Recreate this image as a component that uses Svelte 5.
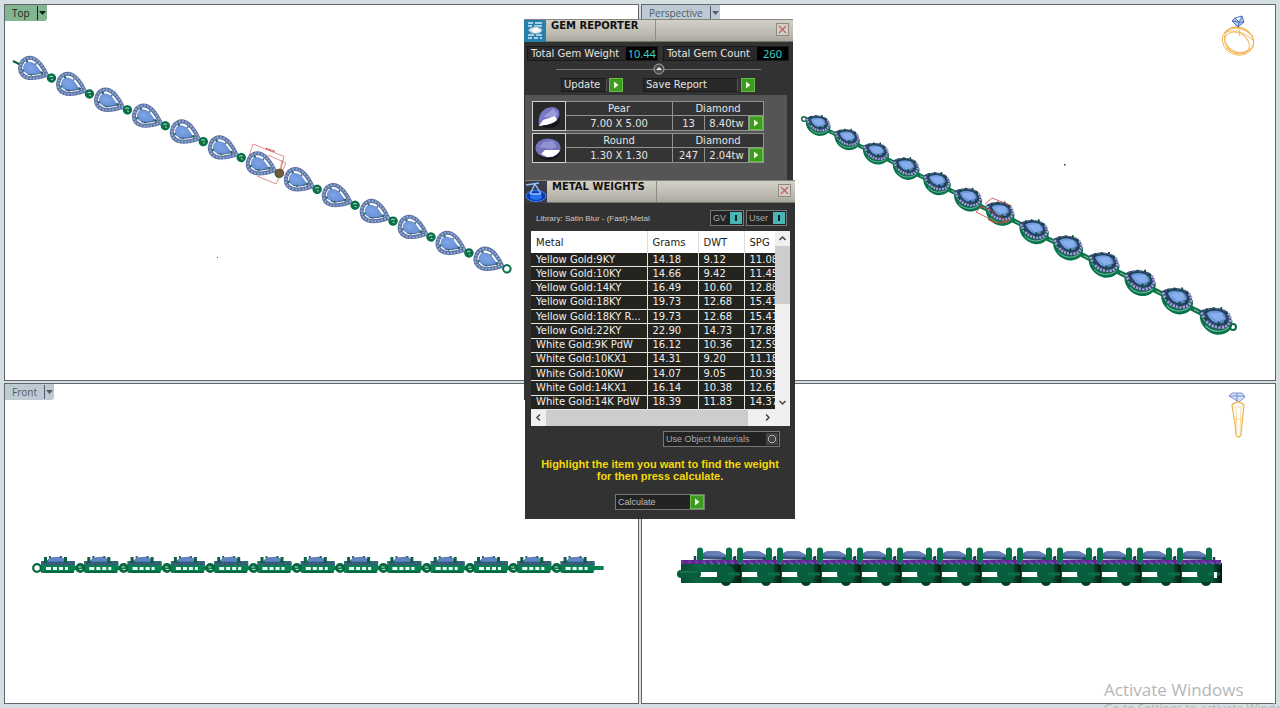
<script>
  let showGv = true;
  let showUser = true;
  let useObjectMaterials = false;

  const gems = [
    { shape: "Pear", type: "Diamond", size: "7.00 X 5.00", count: 13, weight: "8.40tw" },
    { shape: "Round", type: "Diamond", size: "1.30 X 1.30", count: 247, weight: "2.04tw" },
  ];

  const metals = [
    ["Yellow Gold:9KY", "14.18", "9.12", "11.08"],
    ["Yellow Gold:10KY", "14.66", "9.42", "11.45"],
    ["Yellow Gold:14KY", "16.49", "10.60", "12.88"],
    ["Yellow Gold:18KY", "19.73", "12.68", "15.41"],
    ["Yellow Gold:18KY R...", "19.73", "12.68", "15.41"],
    ["Yellow Gold:22KY", "22.90", "14.73", "17.89"],
    ["White Gold:9K PdW", "16.12", "10.36", "12.59"],
    ["White Gold:10KX1", "14.31", "9.20", "11.18"],
    ["White Gold:10KW", "14.07", "9.05", "10.99"],
    ["White Gold:14KX1", "16.14", "10.38", "12.61"],
    ["White Gold:14K PdW", "18.39", "11.83", "14.37"],
  ];

  // the bracelet has 13 stones, each viewport draws them its own way
  const links = Array.from({ length: 13 }, (_, i) => i);

  const perspective = [
    [818, 124], [847, 138], [876, 152], [906, 167], [937, 182], [968, 198], [1000, 212],
    [1034, 230], [1068, 246], [1104, 263], [1140, 281], [1177, 299], [1216, 319],
  ];

  const halo = "M15.500 0 C10 -5 4 -10 -3 -10 C-9 -10 -12.500 -5.500 -12.500 0 C-12.500 5.500 -9 10 -3 10 C4 10 10 5 15.500 0 Z";
</script>

{#snippet arrow()}
  <span class="go">
    <svg viewBox="0 0 12 12" aria-hidden="true"><path d="M4 2.500 L8.500 6 L4 9.500 Z" fill="#e9ffd8" /></svg>
  </span>
{/snippet}

{#snippet closeButton()}
  <button class="close" aria-label="Close">
    <svg viewBox="0 0 11 11" aria-hidden="true"><path d="M2 2 L9 9 M9 2 L2 9" stroke="#c4605c" stroke-width="1.200" /></svg>
  </button>
{/snippet}

{#snippet viewTab(name, active)}
  <button class="tab" class:active>
    <span>{name}</span>
    <svg viewBox="0 0 10 16" aria-hidden="true"><path d="M.5 1 V15" stroke="currentColor" /><path d="M2 6 H9 L5.500 10 Z" fill="currentColor" /></svg>
  </button>
{/snippet}

<main>
  <section class="view">
    {@render viewTab("Top", true)}
    <svg class="scene" viewBox="5 5 633 375" preserveAspectRatio="xMinYMin meet">
      <defs>
        <radialGradient id="stone" cx=".35" cy=".45" r=".7">
          <stop offset="0" stop-color="#7fa5ea" />
          <stop offset=".65" stop-color="#6c93d6" />
          <stop offset="1" stop-color="#4868a8" />
        </radialGradient>
      </defs>
      <path d="M13 61 L21 65" stroke="#0b6040" stroke-width="2" />
      {#each links as i}
        <g transform="translate({32.500 + i * 37.950} {69 + i * 15.900}) rotate(22.700)">
          <path d="M15 0 H25" stroke="#0b6b43" stroke-width="2.500" />
          <path d={halo} fill="#fff" stroke="#5b6f9d" stroke-width="4" />
          <path d={halo} fill="none" stroke="#8aa5d6" stroke-width="2.200" stroke-dasharray="2 1.300" />
          <path d="M10 0 C5 -3 2 -6 -3 -6 C-7 -6 -9.500 -3.500 -9.500 0 C-9.500 4 -7 6.500 -3 6.500 C2 6.500 5 3.500 10 0 Z" fill="url(#stone)" />
          <path d="M9 1 C5 4 2 6.500 -3 6.500" fill="none" stroke="#3d5c96" />
          <g fill="#2a6b66">
            <circle cx="-8" cy="-5" r="1.200" /><circle cx="-8" cy="5" r="1.200" />
            <circle cx="1" cy="-6" r=".9" /><circle cx="1" cy="6" r=".9" /><circle cx="10" cy="0" r="1.500" />
          </g>
          <circle cx="21" cy="1" r="3.700" fill={i === 12 ? "#fff" : "#0b6b43"} stroke="#07734a" stroke-width="2" />
          {#if i < 12}
            <path d="M19 1 a2 2 0 0 1 3 -1.500 M21 2 h2" fill="none" stroke="#b9d8c8" stroke-width="1" />
          {/if}
        </g>
      {/each}
      <path d="M249 156 L253 144 L284 156.500 L280 173 M268 155 L286 163 L276 184 L257 176 M282 160 L280 172" fill="none" stroke="#d27570" stroke-width=".8" />
      <path d="M266 148.500 L275 151.500" stroke="#c8322c" stroke-width="1.500" stroke-dasharray="1 .5" />
      <circle cx="280" cy="173" r="3.500" fill="#5c6a44" stroke="#8c4a32" stroke-width="1.500" />
      <rect x="217" y="257" width="1" height="1" fill="#555" />
    </svg>
  </section>

  <section class="view">
    {@render viewTab("Perspective", false)}
    <svg class="scene" viewBox="642 5 633 375" preserveAspectRatio="xMinYMin meet">
      <circle cx="804" cy="119" r="2.300" fill="none" stroke="#0a6b42" stroke-width="1.500" />
      {#each perspective as [x, y], i}
        <g transform="translate({x} {y}) scale({1 + i * 0.026})">
          {#if i < 12}
            <path d="M11 7 L19 11" stroke="#0b7348" stroke-width="4" />
            <path d="M13 8 L17 10" stroke="#8fc4aa" stroke-width=".8" />
          {/if}
          <path d="M-12 -5 C-14 3 -7 11 1 12 C9 12 13 8 12.500 1 Z" fill="#07734a" />
          <path d="M-8 5 C-4 10 5 11 10 6" fill="none" stroke="#7cc0a0" stroke-width=".8" />
          <path d="M-12 -6 C-5 -10 5 -9 9 -5 C14 0 12 7 4 8 C-5 8 -10 1 -12 -6 Z" fill="#33446f" />
          <path d="M-11 -5 C-9 1 -5 6.500 4 6.500 C11 6 13 0 9 -4.500" fill="none" stroke="#a3a4d8" stroke-width="2.200" stroke-dasharray="1.700 .9" />
          <path d="M-9 -7 C-4 -8.500 4 -8 8 -6" fill="none" stroke="#6f6fae" stroke-width="1" stroke-dasharray="1.500 1.500" />
          <path d="M-8 -5 C-3 -8 4 -7 7 -4 C10 0 8 4 3 4 C-3 4 -6 0 -8 -5 Z" fill="url(#stone)" stroke="#1a4355" stroke-width="1" />
          <path d="M-5 -4 L4 -5 L7 0 L1 2 Z" fill="#91baf2" opacity=".65" />
          <path d="M-7 -8 v3 M-2 -9 v2 M4 -9 v2 M8 -6 v2 M2 2 v4 M7 1 v3 M-9 -1 l2 2" stroke="#0b4d3b" stroke-width="1.500" />
        </g>
      {/each}
      <circle cx="1233" cy="327" r="3" fill="none" stroke="#0a6b42" stroke-width="2" />
      <path d="M985 204 L992 198 L1012 206 M982 206 L976 212 L994 221 M980 206 L990 210 L1008 222" fill="none" stroke="#c8423c" stroke-width=".8" />
      <path d="M988 219 Q998 226 1010 220" fill="none" stroke="#9a5a38" stroke-width="1.500" />
      <rect x="1064" y="164" width="1.500" height="1.500" fill="#333" />
      <!-- ring preview -->
      <g fill="none" stroke="#f0b455" stroke-width=".9">
        <ellipse cx="1238" cy="41" rx="16" ry="14" transform="rotate(20 1238 41)" />
        <ellipse cx="1239" cy="40" rx="15" ry="12" transform="rotate(25 1239 40)" />
        <ellipse cx="1237" cy="43" rx="13" ry="10" transform="rotate(32 1237 43)" />
        <path d="M1224 33 Q1237 26 1253 40 M1226 31 Q1238 23 1253 36 M1226 48 Q1238 58 1252 48" />
        <path d="M1236 26 L1240 31 L1239 36" />
      </g>
      <path d="M1232 21 L1235 18 L1242 16 L1244 22 L1238 27 Z M1232 21 L1239 22 L1244 22 M1235 18 L1239 22 L1242 16 M1239 22 L1238 27" fill="#b3c6f2" stroke="#4163b8" stroke-width=".9" />
    </svg>
  </section>

  <section class="view">
    {@render viewTab("Front", false)}
    <svg class="scene" viewBox="5 384 633 319" preserveAspectRatio="xMinYMin meet">
      {#each links as i}
        <g transform="translate({37 + i * 43.300} 568)">
          <path d="M3 -3 L8 -5 H38 V-2 H47 V2 H38 L36 5 H8 L3 3 Z" fill="#078052" />
          <path d="M4 4 H37" stroke="#07603e" stroke-width="1.500" />
          <path d="M9 .5 h5 M16 .5 h4 M22 .5 h4 M28 .5 h3" stroke="#eafff5" stroke-width="3" />
          <rect x="4" y="-7" width="34" height="4" fill="#3f5280" />
          <path d="M4 -5.500 H38" stroke="#1f7f60" stroke-width="3" stroke-dasharray="1.500 2.500" />
          <path d="M10 -7 L13 -10 L24 -11 L28 -8 L27 -6 H12 Z" fill="#5f86c4" stroke="#304f82" stroke-width=".6" />
          <path d="M8.500 -11 V-5 M28.500 -11 V-5" stroke="#0a6242" stroke-width="3" />
          <path d="M13 -12 v2 M24 -12 v2" stroke="#3d5c86" stroke-width="2" />
          <circle r="3.800" fill={i === 0 ? "#fff" : "#0b7a4e"} stroke="#07663e" stroke-width="2.200" />
          {#if i > 0}
            <path d="M-2 -1 H1 M-1 1.500 H2" stroke="#b9dccb" stroke-width="1" />
          {/if}
        </g>
      {/each}
    </svg>
  </section>

  <section class="view">
    <svg class="scene" viewBox="642 384 633 319" preserveAspectRatio="xMinYMin meet">
      <defs>
        <linearGradient id="metal">
          <stop offset="0" stop-color="#084c31" />
          <stop offset=".3" stop-color="#086743" />
          <stop offset=".75" stop-color="#07583a" />
          <stop offset="1" stop-color="#02160e" />
        </linearGradient>
        <linearGradient id="facet" y2="1" x2="0">
          <stop offset="0" stop-color="#6b84ba" />
          <stop offset="1" stop-color="#2f4777" />
        </linearGradient>
      </defs>
      {#each links as i}
        <g transform="translate({701 + i * 40} 564)">
          <rect x={i === 0 ? -20 : 0} y="-1" width={i === 0 ? 61 : 41} height="20" fill="url(#metal)" />
          <rect x={i === 0 ? -3 : 1} y="8" width={i === 0 ? 19 : 16} height="5" fill="#fff" />
          <ellipse cx="25" cy="10" rx="9" ry="9" fill="#075d3d" />
          <path d="M20 18 h10 q-1 4 -5 4 q-4 0 -5 -4 Z" fill="#064028" />
          <path d="M27 10 H39" stroke="#0b7048" stroke-width="3" />
          <path d="M-4 -5 L0 -10 L6 -13 H18 L27 -8 V-4 Z" fill="url(#facet)" />
          <path d="M3 -10 L18 -12 L26 -7 L8 -8 Z" fill="#6d88c0" opacity=".7" />
          <path d="M-1 -13.500 V-4 M28 -13.500 V-4" stroke="#077348" stroke-width="6" stroke-linecap="round" />
          <path d="M-6 -8 v4 M23 -7 v4 M33 -7 v3" stroke="#263e5b" stroke-width="2.500" />
          <rect x={i === 0 ? -20 : 0} y="-4" width={i === 0 ? 60 : 40} height="4" fill="#5d2690" />
          <path d="M{i === 0 ? -20 : 0} -2 H41" stroke="#6f3aa0" stroke-width="3" stroke-dasharray="3 4" />
          <path d="M3 -.5 H40" stroke="#4a7f9a" stroke-width="2" stroke-dasharray="2 5" />
        </g>
      {/each}
      <rect x="677" y="570" width="24" height="8" rx="4" fill="#075c3b" />
      <path d="M680 572 H698" stroke="#1c7952" stroke-width="1.500" />
      <rect x="1214" y="572" width="3" height="6" fill="#fff" />
      <!-- side view of the ring -->
      <path d="M1229 396 L1232 393 H1242 L1245 397 L1239 402 Z M1229 396 H1245 M1237 393 V401" fill="#d5def8" stroke="#647dc8" stroke-width=".8" />
      <g fill="none" stroke="#ecb955">
        <path d="M1232 405 Q1238 399 1244 405 L1242 424 L1241 435 Q1238 439 1236 435 L1235 424 Z" stroke-width="1.300" />
        <path d="M1233 407 H1244 M1235 419 H1242 M1236 408 L1237 434 M1241 408 L1240 434" stroke-width=".5" />
      </g>
    </svg>
  </section>
</main>

<aside class="window gem-reporter">
  <header>
    <svg class="app-icon" viewBox="0 0 22 22" aria-hidden="true">
      <rect width="22" height="22" fill="#287eac" />
      <path d="M4 3 h5 M11 3 h7 M4 6 h4 M10 6 h8 M4 15 h6 M12 15 h6 M4 18 h4 M10 18 h4 M16 18 h2" stroke="#d0edf8" stroke-width="1.500" />
      <path d="M4 10 Q10 4 18 9 Q19 13 12 14 Q7 14 4 10 Z" fill="#d8e6e8" stroke="#679db4" />
      <path d="M8 10 L13 7 L16 11 L11 13 Z" fill="#fff" />
    </svg>
    <h2>GEM REPORTER</h2>
    {@render closeButton()}
  </header>
  <div class="totals">
    <div class="total"><span>Total Gem Weight</span><output>10.44</output></div>
    <div class="total"><span>Total Gem Count</span><output>260</output></div>
  </div>
  <div class="divider">
    <button aria-label="Collapse">
      <svg viewBox="0 0 12 12" aria-hidden="true"><circle cx="6" cy="6" r="5" fill="#4b4b4b" stroke="#aaa" /><path d="M3 7 L6 4 L9 7 Z" fill="#eee" /></svg>
    </button>
  </div>
  <div class="actions">
    <button class="action update"><span>Update</span>{@render arrow()}</button>
    <button class="action save"><span>Save Report</span>{@render arrow()}</button>
  </div>
  <div class="gem-list">
    {#each gems as gem}
      <table class="gem">
        <tbody>
          <tr>
            <td class="thumb" rowspan="2">
              <svg viewBox="0 0 30 28" aria-label={gem.shape}>
                <ellipse cx="16" cy="18" rx="11" ry="8" fill="#15151c" />
                {#if gem.shape === "Pear"}
                  <path d="M6 24 C4 14 9 5 20 5 C28 6 28 15 23 19 C18 23 11 23 6 24 Z" fill="#7777c5" />
                  <path d="M10 15 L20 7 L25 12 L21 15 Z" fill="#9a9edb" />
                  <path d="M6 24 L10 18 L22 14 L24 18 C18 23 11 23 6 24 Z" fill="#fff" />
                {:else}
                  <ellipse cx="15" cy="14" rx="12.500" ry="9.500" fill="#7373bd" />
                  <path d="M6 13 L11 8 L20 7 L24 13 L18 15 Z" fill="#8f93d2" />
                  <path d="M8 20 L12 16 L27 16 Q23 24 14 23 Z" fill="#fff" />
                {/if}
              </svg>
            </td>
            <td class="shape">{gem.shape}</td>
            <td colspan="3">{gem.type}</td>
          </tr>
          <tr>
            <td>{gem.size}</td>
            <td class="count">{gem.count}</td>
            <td class="weight">{gem.weight}</td>
            <td class="open"><button aria-label="Open {gem.shape}">{@render arrow()}</button></td>
          </tr>
        </tbody>
      </table>
    {/each}
  </div>
</aside>

<aside class="window metal-weights">
  <header>
    <svg class="app-icon" viewBox="0 0 22 22" aria-hidden="true">
      <rect width="22" height="22" fill="#3a3d48" />
      <ellipse cx="11" cy="15" rx="10" ry="5.500" fill="#1236b9" stroke="#3d86ed" />
      <ellipse cx="11" cy="16" rx="6" ry="3" fill="#2671ed" />
      <path d="M1 4 L14 2 M10 3 L5 13 M10 3 L16 13 M5 13 H16" fill="none" stroke="#91c5ff" stroke-width="1.400" />
    </svg>
    <h2>METAL WEIGHTS</h2>
    {@render closeButton()}
  </header>
  <div class="library">
    <span>Library: Satin Blur - (Fast)-Metal</span>
    <label class="switch gv">GV<input type="checkbox" bind:checked={showGv} /></label>
    <label class="switch">User<input type="checkbox" bind:checked={showUser} /></label>
  </div>

  <div class="grid-box">
    <div class="rows">
      <table class="metals">
        <thead>
          <tr><th class="metal">Metal</th><th class="grams">Grams</th><th class="dwt">DWT</th><th>SPG</th></tr>
        </thead>
        <tbody>
          {#each metals as row}
            <tr>
              {#each row as cell}
                <td>{cell}</td>
              {/each}
            </tr>
          {/each}
        </tbody>
      </table>
    </div>
    <div class="scroll vertical">
      <button aria-label="Scroll up"><svg viewBox="0 0 15 15"><path d="M4.500 9 L7.500 6 L10.500 9" /></svg></button>
      <div class="thumb-bar"></div>
      <button aria-label="Scroll down"><svg viewBox="0 0 15 15"><path d="M4.500 6 L7.500 9 L10.500 6" /></svg></button>
    </div>
    <div class="scroll horizontal">
      <button aria-label="Scroll left"><svg viewBox="0 0 15 15"><path d="M9 4.500 L6 7.500 L9 10.500" /></svg></button>
      <div class="thumb-bar"></div>
      <button aria-label="Scroll right"><svg viewBox="0 0 15 15"><path d="M6 4.500 L9 7.500 L6 10.500" /></svg></button>
    </div>
  </div>

  <label class="switch materials">Use Object Materials<input type="checkbox" bind:checked={useObjectMaterials} /></label>
  <p class="hint">Highlight the item you want to find the weight for then press calculate.</p>
  <button class="calculate"><span>Calculate</span>{@render arrow()}</button>
</aside>

<div class="watermark">
  <p>Activate Windows</p>
  <small>Go to Settings to activate Windows.</small>
</div>

<style>
  :global(*, *::before, *::after) {
    box-sizing: border-box;
  }

  :global(body) {
    margin: 0;
    background: #d5dfe1;
    font-family: "DejaVu Sans", Verdana, sans-serif;
    font-size: 10px;
    overflow: hidden;
  }

  button {
    font: inherit;
    color: inherit;
    padding: 0;
    border: 0;
    background: none;
  }

  svg {
    display: block;
  }

  main {
    height: 100vh;
    padding: 4px;
    display: grid;
    grid-template-columns: 1fr 1fr;
    grid-template-rows: 377fr 321fr;
    gap: 2px;
  }

  .view {
    position: relative;
    min-width: 0;
    min-height: 0;
    background: #fff;
    border: 1px solid #62666a;
  }

  .scene {
    width: 100%;
    height: 100%;
  }

  .tab {
    position: absolute;
    top: 0;
    left: 0;
    height: 16px;
    padding: 0 0 0 7px;
    display: flex;
    align-items: center;
    gap: 7px;
    background: #bdcad4;
    color: #4e5d69;
    border-radius: 0 0 3px 0;
    font-family: "Open Sans", sans-serif;
    font-size: 10px;
    line-height: 16px;
  }

  .tab.active {
    background: #84b591;
    color: #14231a;
  }

  .tab svg {
    width: 10px;
    height: 16px;
  }

  .window {
    position: absolute;
    background: #323232;
    color: #e4e4e4;
  }

  .gem-reporter {
    left: 524px;
    top: 19px;
    width: 269px;
    height: 381px;
  }

  .metal-weights {
    left: 525px;
    top: 180px;
    width: 270px;
    padding-bottom: 9px;
  }

  header {
    height: 23px;
    display: flex;
    background: linear-gradient(#d3d0c8, #bbb8af 70%, #aaa79d);
    border-top: 1px solid #85837d;
    border-bottom: 1px solid #77756f;
    color: #111;
  }

  .app-icon {
    width: 22px;
    height: 22px;
  }

  h2 {
    width: 110px;
    margin: 0;
    padding-left: 5px;
    border-right: 1px solid #8d8b84;
    font-size: 10px;
    line-height: 12px;
    font-weight: bold;
    white-space: nowrap;
  }

  .close {
    width: 13px;
    height: 13px;
    margin: 3px 4px 0 auto;
    border: 1px solid #8e8b84;
    background: #d3cfc6;
  }

  .totals {
    display: flex;
    justify-content: space-between;
    padding: 4px 4px 0 3px;
  }

  .total {
    height: 15px;
    display: flex;
    background: #292929;
    border: 1px solid #191919;
    line-height: 13px;
    white-space: nowrap;
  }

  .total span {
    padding: 0 7px 0 3px;
  }

  .total output {
    width: 31px;
    background: #000;
    color: #35d5cc;
    font-family: "Noto Sans", sans-serif;
    font-size: 11px;
    text-align: center;
  }

  .divider {
    height: 12px;
    margin: 2px 32px 0;
    display: flex;
    justify-content: center;
    background: linear-gradient(#777, #777) center / 100% 1px no-repeat;
  }

  .divider button {
    width: 12px;
    height: 12px;
  }

  .actions {
    display: flex;
    gap: 20px;
    padding: 3px 0 0 37px;
  }

  .action {
    height: 14px;
    display: flex;
    justify-content: space-between;
    align-items: center;
    text-align: left;
  }

  .action > span:first-child {
    height: 14px;
    padding-left: 2px;
    background: #282828;
    border: 1px solid #1b1b1b;
    border-right-color: #555;
    line-height: 12px;
  }

  .update {
    width: 62px;
  }

  .update > span:first-child {
    width: 46px;
  }

  .save {
    width: 112px;
  }

  .save > span:first-child {
    width: 95px;
  }

  .go {
    display: block;
    width: 14px;
    height: 14px;
    background: #3f9a21;
    border: 1px solid #69bb47;
    flex: none;
  }

  .gem-list {
    height: 304px;
    margin: 3px 6px 0 1px;
    padding: 6px 0 0 7px;
    background: #555;
  }

  .gem {
    width: 232px;
    height: 30px;
    margin-bottom: 2px;
    border-collapse: collapse;
    background: #343434;
    text-align: center;
    line-height: 13px;
  }

  .gem td {
    height: 14px;
    padding: 0;
    border: 1px solid #929292;
  }

  .gem .thumb {
    width: 33px;
    border-color: #d0d0d0;
    background: #292929;
  }

  .thumb svg {
    width: 30px;
    height: 28px;
  }

  .gem .shape {
    width: 107px;
  }

  .gem .count {
    width: 32px;
  }

  .gem .weight {
    width: 44px;
  }

  .gem .open {
    width: 15px;
  }

  .open button {
    display: block;
  }

  .library {
    display: flex;
    align-items: center;
    gap: 2px;
    height: 16px;
    margin: 7px 8px 5px 11px;
    font-family: "Liberation Sans", Arial, sans-serif;
    font-size: 8px;
    color: #ccc;
  }

  .library > span {
    flex: 1;
  }

  .switch {
    height: 16px;
    padding: 0 1px 0 2px;
    display: flex;
    align-items: center;
    justify-content: space-between;
    background: #232323;
    border: 1px solid #777;
    color: #aaa;
    font-family: "Liberation Sans", Arial, sans-serif;
    font-size: 9px;
    width: 41px;
  }

  .switch.gv {
    width: 34px;
  }

  .switch input {
    appearance: none;
    width: 12px;
    height: 12px;
    margin: 0;
    background: radial-gradient(circle, #444 3px, #aaa 3px, #aaa 4px, #444 4px);
  }

  .switch input:checked {
    background: linear-gradient(#102020, #102020) center / 2px 6px no-repeat, #49b5b5;
  }

  .grid-box {
    height: 195px;
    margin: 0 5px 0 6px;
    display: grid;
    grid-template-columns: 1fr 15px;
    grid-template-rows: 1fr 16px;
    background: #f0f0f0;
  }

  .rows {
    overflow: hidden;
    min-width: 0;
  }

  .metals {
    width: 272px;
    height: 179px;
    table-layout: fixed;
    border-collapse: collapse;
    text-align: left;
    white-space: nowrap;
  }

  .metals th {
    height: 22px;
    padding: 0 5px;
    background: #fff;
    border-right: 1px solid #ddd;
    color: #222;
    font-weight: normal;
  }

  .metals .metal {
    width: 116px;
  }

  .metals .grams {
    width: 51px;
  }

  .metals .dwt {
    width: 46px;
  }

  .metals td {
    padding: 0 5px;
    background: #24231e;
    border-right: 1px solid #e4e4e0;
    border-bottom: 1px solid #e4e4e0;
    line-height: 12px;
    color: #eee;
  }

  .scroll {
    display: flex;
    background: #f0f0f0;
  }

  .vertical {
    flex-direction: column;
  }

  .horizontal {
    padding-right: 15px;
    grid-column: 1 / 3;
  }

  .scroll button {
    width: 15px;
    height: 15px;
    flex: none;
  }

  .scroll path {
    fill: none;
    stroke: #444;
    stroke-width: 1.5;
  }

  .thumb-bar {
    background: #cdcdcd;
  }

  .vertical .thumb-bar {
    height: 58px;
    margin-bottom: auto;
  }

  .horizontal .thumb-bar {
    width: 202px;
    margin-right: auto;
  }

  .switch.materials {
    width: 117px;
    margin: 5px 15px 0 auto;
  }

  .hint {
    width: 244px;
    margin: 11px auto 12px;
    font-family: "Liberation Sans", Arial, sans-serif;
    font-size: 11px;
    line-height: 12px;
    font-weight: bold;
    text-align: center;
    color: #f5d90a;
  }

  .calculate {
    width: 90px;
    height: 16px;
    margin: 0 auto;
    padding: 0 0 0 2px;
    display: flex;
    align-items: center;
    justify-content: space-between;
    background: #232323;
    border: 1px solid #777;
    color: #bbb;
    font-family: "Liberation Sans", Arial, sans-serif;
    font-size: 9px;
  }

  .watermark {
    position: absolute;
    right: 35px;
    bottom: -10px;
    width: 141px;
    font-family: "Open Sans", sans-serif;
    white-space: nowrap;
    color: #b4b7b8;
    pointer-events: none;
  }

  .watermark p {
    margin: 0;
    font-size: 17px;
    line-height: 20px;
  }

  .watermark small {
    display: block;
    font-size: 12px;
    line-height: 18px;
  }
</style>
